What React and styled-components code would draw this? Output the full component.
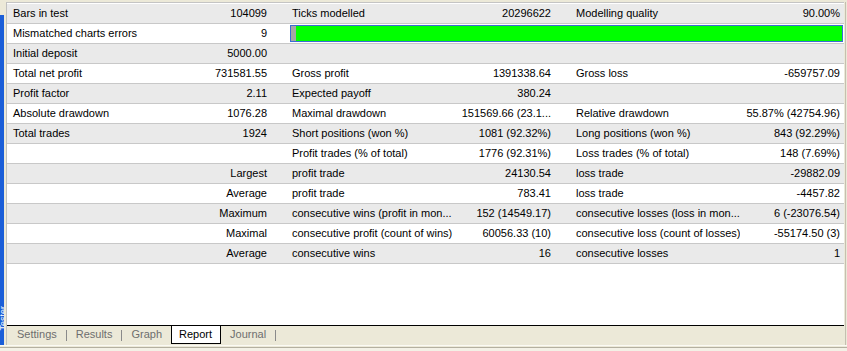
import styled, { createGlobalStyle } from "styled-components";

const GlobalStyle = createGlobalStyle`
  html, body {
    margin: 0;
    padding: 0;
    background: #ece9d8;
  }
  body {
    font-family: "Liberation Sans", Arial, sans-serif;
    font-size: 11px;
    color: #000;
  }
`;

const Window = styled.div`
  width: 847px;
  height: 351px;
  display: flex;
  flex-direction: column;
  overflow: hidden;
  background: #ece9d8;
`;

const Body = styled.div`
  flex: 1;
  display: flex;
  min-height: 0;
`;

const SideBar = styled.div`
  width: 4px;
  margin-top: 15px;
  background: #1b5ed8;
  display: flex;
  flex-direction: column;
  justify-content: flex-end;
  overflow: hidden;
`;

const SideLabel = styled.span`
  writing-mode: vertical-rl;
  transform: rotate(180deg);
  color: #fff;
  font-size: 9px;
  line-height: 9px;
  margin-bottom: 14px;
  margin-left: -1px;
`;

const Panel = styled.div`
  flex: 1;
  display: flex;
  flex-direction: column;
  margin: 2px 1px 0 2px;
  border-left: 1px solid #c0c0c0;
  border-right: 1px solid #c4c0b0;
  padding-right: 1px;
  min-width: 0;
`;

const Report = styled.div`
  flex: 1;
  background: #fff;
  border-top: 1px solid #c4c4c4;
  padding-top: 1px;
`;

const Row = styled.div`
  display: grid;
  grid-template-columns: 143px 136px 172px 112px 170px 1fr;
  height: 19px;
  line-height: 19px;
  border-bottom: 1px solid #c8c8c8;
  background: ${(p) => (p.$shade ? "#eaeaea" : "#fff")};
`;

const Cell = styled.div`
  white-space: nowrap;
  overflow: hidden;
  padding: ${(p) => (p.$num ? "0 19px 0 0" : "0 0 0 6px")};
  text-align: ${(p) => (p.$num ? "right" : "left")};
  &:nth-child(6) {
    padding-right: 4px;
  }
`;

const BarCell = styled.div`
  grid-column: 3 / 7;
  padding: 1px 1px 0 4px;
`;

const Bar = styled.div`
  height: 15px;
  border: 1px solid #3b6cd4;
  background: #00ff00;
  display: flex;
`;

const BarStart = styled.div`
  width: 5px;
  background: #a6a6a6;
`;

const TabBar = styled.div`
  height: 19px;
  border-top: 1px solid #000;
  display: flex;
  align-items: flex-start;
  padding-left: 1px;
  background: #ece9d8;
`;

const Tab = styled.div`
  height: 17px;
  line-height: 17px;
  padding: ${(p) => (p.$active ? "0 8px 0 7px" : "0 9px")};
  color: ${(p) => (p.$active ? "#000" : "#6e6e6e")};
  background: ${(p) => (p.$active ? "#fff" : "transparent")};
  border: ${(p) => (p.$active ? "1px solid #000" : "none")};
  border-top: none;
`;

const Sep = styled.div`
  width: 1px;
  height: 11px;
  margin-top: 4px;
  background: #8a8a8a;
`;

const Footer = styled.div`
  height: 5px;
  border-top: 1px solid #fbfaf4;
  background: linear-gradient(#ece9d8 0 1px, #b4b0a0 1px 2px, #f3f1e6 2px);
`;

const rows = [
  ["Bars in test", "104099", "Ticks modelled", "20296622", "Modelling quality", "90.00%"],
  "bar",
  ["Initial deposit", "5000.00", "", "", "", ""],
  ["Total net profit", "731581.55", "Gross profit", "1391338.64", "Gross loss", "-659757.09"],
  ["Profit factor", "2.11", "Expected payoff", "380.24", "", ""],
  ["Absolute drawdown", "1076.28", "Maximal drawdown", "151569.66 (23.1...", "Relative drawdown", "55.87% (42754.96)"],
  ["Total trades", "1924", "Short positions (won %)", "1081 (92.32%)", "Long positions (won %)", "843 (92.29%)"],
  ["", "", "Profit trades (% of total)", "1776 (92.31%)", "Loss trades (% of total)", "148 (7.69%)"],
  ["", "Largest", "profit trade", "24130.54", "loss trade", "-29882.09"],
  ["", "Average", "profit trade", "783.41", "loss trade", "-4457.82"],
  ["", "Maximum", "consecutive wins (profit in mon...", "152 (14549.17)", "consecutive losses (loss in mon...", "6 (-23076.54)"],
  ["", "Maximal", "consecutive profit (count of wins)", "60056.33 (10)", "consecutive loss (count of losses)", "-55174.50 (3)"],
  ["", "Average", "consecutive wins", "16", "consecutive losses", "1"],
];

export default function App() {
  return (
    <Window>
      <GlobalStyle />
      <Body>
        <SideBar>
          <SideLabel>Tester</SideLabel>
        </SideBar>
        <Panel>
          <Report>
            {rows.map((r, i) =>
              r === "bar" ? (
                <Row key={i} $shade={i % 2 === 0}>
                  <Cell>Mismatched charts errors</Cell>
                  <Cell $num>9</Cell>
                  <BarCell>
                    <Bar>
                      <BarStart />
                    </Bar>
                  </BarCell>
                </Row>
              ) : (
                <Row key={i} $shade={i % 2 === 0}>
                  {r.map((c, j) => (
                    <Cell key={j} $num={j % 2 === 1}>
                      {c}
                    </Cell>
                  ))}
                </Row>
              )
            )}
          </Report>
          <TabBar>
            <Tab>Settings</Tab>
            <Sep />
            <Tab>Results</Tab>
            <Sep />
            <Tab>Graph</Tab>
            <Tab $active>Report</Tab>
            <Tab>Journal</Tab>
            <Sep />
          </TabBar>
        </Panel>
      </Body>
      <Footer />
    </Window>
  );
}
